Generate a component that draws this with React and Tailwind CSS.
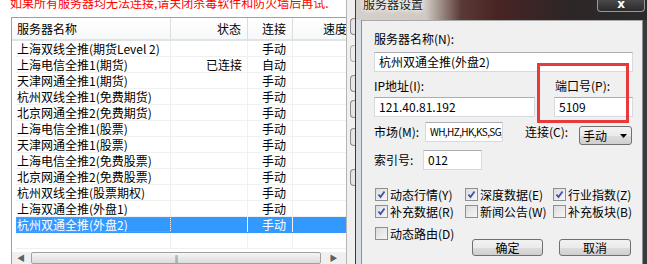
import React from 'react';

const rows = [
  ['上海双线全推(期货Level 2)', '', '手动'],
  ['上海电信全推1(期货)', '已连接', '自动'],
  ['天津网通全推1(期货)', '', '手动'],
  ['杭州双线全推1(免费期货)', '', '手动'],
  ['北京网通全推2(免费期货)', '', '手动'],
  ['上海电信全推1(股票)', '', '手动'],
  ['天津网通全推1(股票)', '', '手动'],
  ['上海电信全推2(免费股票)', '', '手动'],
  ['北京网通全推2(免费股票)', '', '手动'],
  ['杭州双线全推(股票期权)', '', '手动'],
  ['上海双通全推(外盘1)', '', '手动'],
  ['杭州双通全推(外盘2)', '', '手动'],
];

const checks = [
  [
    ['动态行情(Y)', true],
    ['深度数据(E)', true],
    ['行业指数(Z)', true],
  ],
  [
    ['补充数据(R)', true],
    ['新闻公告(W)', false],
    ['补充板块(B)', false],
  ],
];

function CheckBox({ checked }) {
  return (
    <div className="w-[13px] h-[13px] border border-[#8e8f8f] bg-[linear-gradient(135deg,#dcdcdc,#f6f6f6)] p-[1px] shrink-0">
      {checked && (
        <svg viewBox="0 0 11 11" className="w-[11px] h-[11px] -mt-[1px] -ml-[1px]">
          <path d="M2.5 5.5 L4.5 8 L8.5 2.5" fill="none" stroke="#3d4fb0" strokeWidth="1.8" />
        </svg>
      )}
    </div>
  );
}

function Check({ label, checked, w }) {
  return (
    <div className={`flex items-center gap-[2px] h-[13px] ${w}`}>
      <CheckBox checked={checked} />
      <span className="leading-[13px] whitespace-nowrap">{label}</span>
    </div>
  );
}

function Input({ className, children }) {
  return (
    <div
      className={`h-[20px] bg-white border border-[#d6d9dd] border-t-[#abadb3] pl-[4px] leading-[18px] overflow-hidden whitespace-nowrap ${className}`}
    >
      {children}
    </div>
  );
}

function Btn({ children, className }) {
  return (
    <div
      className={`h-[17px] rounded-[3px] border border-[#707070] bg-[linear-gradient(#f2f2f2,#ebebeb_50%,#dddddd_51%,#cfcfcf)] text-center leading-[15px] ${className}`}
    >
      {children}
    </div>
  );
}

export default function App() {
  return (
    <div className="w-[647px] h-[264px] overflow-hidden relative flex bg-white text-[12px] text-black font-['Noto_Sans_CJK_SC','Noto_Sans',sans-serif]">
      {/* list window behind */}
      <div className="w-[346px] shrink-0 flex flex-col bg-white">
        <div className="h-[18px] overflow-hidden pl-[10px]">
          <div className="-mt-[4px] leading-[14px] text-[#ff0000] whitespace-nowrap">
            如果所有服务器均无法连接,请关闭杀毒软件和防火墙后再试.
          </div>
        </div>
        <div className="ml-[11px] flex-1 border-l border-t border-[#9a9ea6] flex flex-col">
          <div className="h-[23px] flex border-b-2 border-[#e2e3e5] bg-[linear-gradient(#ffffff,#f7f8f9)] leading-[22px]">
            <div className="w-[159px] border-r border-[#dcdcdc] pl-[5px]">服务器名称</div>
            <div className="w-[77px] border-r border-[#dcdcdc] text-right pr-[6px]">状态</div>
            <div className="w-[45px] border-r border-[#dcdcdc] pl-[14px]">连接</div>
            <div className="flex-1 pl-[30px] whitespace-nowrap overflow-hidden">速度</div>
          </div>
          {rows.map((r, i) => {
            const sel = i === rows.length - 1;
            return (
              <div key={i} className="h-[16px] flex pl-[4px] leading-[15px]">
                <div className={`flex flex-1 border-b ${sel ? 'bg-[#3399ff] text-white border-[#3399ff]' : 'border-[#f0f0f0]'}`}>
                  <div className={`w-[155px] pl-[1px] border-r whitespace-nowrap overflow-hidden ${sel ? 'border-[#f0f0f0] outline outline-1 outline-dotted outline-[#e08a2c] -outline-offset-1' : 'border-[#f0f0f0]'}`}>
                    {r[0]}
                  </div>
                  <div className="w-[77px] border-r border-[#f0f0f0] text-right pr-[5px]">{r[1]}</div>
                  <div className="w-[45px] border-r border-[#f0f0f0] pl-[14px]">{r[2]}</div>
                  <div className="flex-1" />
                </div>
              </div>
            );
          })}
          <div className="h-[16px] flex pl-[4px]">
            <div className="flex flex-1 border-b border-[#f0f0f0]">
              <div className="w-[155px] border-r border-[#f0f0f0]" />
              <div className="w-[77px] border-r border-[#f0f0f0]" />
              <div className="w-[45px] border-r border-[#f0f0f0]" />
            </div>
          </div>
          {/* horizontal scrollbar */}
          <div className="mt-[3px] h-[12px] flex items-start bg-[#f0f0f0]">
            <div className="w-[18px] text-[8px] leading-[12px] text-center text-[#606060]">◀</div>
            <div className="ml-[1px] w-[290px] h-[12px] rounded-[2px] border border-[#a0a0a0] bg-[linear-gradient(#f5f5f5,#dcdcdc)] flex justify-center">
              <span className="text-[7px] leading-[10px] text-[#777] tracking-[-1px]">|||</span>
            </div>
            <div className="flex-1 text-[8px] leading-[12px] text-center text-[#606060]">▶</div>
          </div>
        </div>
      </div>

      {/* strip with hidden buttons */}
      <div className="w-[9px] shrink-0 border-l border-[#b5b5b5] bg-[#f0f0f0] flex flex-col pl-[3px]">
        <div className="mt-[18px] h-[17px] rounded-l-[4px] border border-r-0 border-[#8a8a8a] bg-[#e6e6e6]" />
        <div className="mt-[10px] h-[17px] rounded-l-[4px] border border-r-0 border-[#b0b0b0] bg-[#ececec]" />
        <div className="mt-[13px] h-[17px] rounded-l-[4px] border border-r-0 border-[#8a8a8a] bg-[#e6e6e6]" />
        <div className="mt-[8px] h-[18px] rounded-l-[4px] border border-r-0 border-[#8a8a8a] bg-[#e6e6e6]" />
        <div className="mt-[10px] h-[18px] rounded-l-[4px] border border-r-0 border-[#8a8a8a] bg-[#e6e6e6]" />
        <div className="mt-[23px] h-[17px] rounded-l-[4px] border border-r-0 border-[#8a8a8a] bg-[#e6e6e6]" />
      </div>

      {/* dialog */}
      <div className="flex-1 flex flex-col border-l border-[#3a3a3a]">
        <div className="h-[20px] flex shrink-0 bg-[linear-gradient(90deg,#d4d0ca_0px,#cfc9c2_70px,#5a3a36_105px,#4a2424_140px,#2e2626_210px,#2a2a2c_100%)]">
          <div className="pl-[7px] -mt-[3px] leading-[14px] text-[#1a1a1a] [text-shadow:0_0_6px_#ffffff,0_0_4px_#ffffff]">服务器设置</div>
          <div className="flex-1" />
          <div className="mr-[2px] w-[48px] h-[12px] rounded-b-[4px] border border-t-0 border-[#9a9a9a] bg-[linear-gradient(#4a4a4a,#2a2a2a)] text-white text-[12px] font-bold leading-[9px] text-center font-['DejaVu_Sans',sans-serif]">
            x
          </div>
        </div>
        <div className="flex-1 flex">
          <div className="w-[6px] bg-[#d9dee4] border-r border-[#8c8f94]" />
          <div className="w-[280px] bg-[#f0f0f0] border-t border-[#a8a8a8] pl-[12px] flex flex-col">
            <div className="mt-[11px] leading-[14px]">服务器名称(N):</div>
            <Input className="mt-[6px] w-[259px]">杭州双通全推(外盘2)</Input>
            <div className="flex">
              <div className="w-[161px]">
                <div className="mt-[7px] leading-[14px]">IP地址(I):</div>
                <Input className="mt-[4px] w-[161px]">121.40.81.192</Input>
              </div>
              <div className="ml-[19px] w-[79px]">
                <div className="mt-[7px] pl-[1px] leading-[14px]">端口号(P):</div>
                <Input className="mt-[4px] w-[79px]">5109</Input>
              </div>
            </div>
            <div className="flex items-start mt-[5px]">
              <div className="w-[51px] mt-[3px] leading-[14px] whitespace-nowrap">市场(M):</div>
              <Input className="w-[78px] text-[10px] pl-[2px] tracking-[-0.6px]">WH,HZ,HK,KS,SG,</Input>
              <div className="ml-[22px] w-[54px] mt-[3px] leading-[14px] whitespace-nowrap">连接(C):</div>
              <div className="mt-[4px] w-[53px] h-[19px] rounded-[3px] border border-[#707070] bg-[linear-gradient(#f2f2f2,#ebebeb_50%,#dddddd_51%,#cfcfcf)] flex items-center pl-[3px] pr-[4px]">
                <span className="leading-[17px]">手动</span>
                <span className="flex-1" />
                <svg viewBox="0 0 7 4" className="w-[7px] h-[4px]">
                  <path d="M0 0 H7 L3.5 4 Z" fill="#000" />
                </svg>
              </div>
            </div>
            <div className="flex items-center mt-[5px]">
              <div className="w-[49px] leading-[14px]">索引号:</div>
              <Input className="w-[59px]">012</Input>
            </div>
            <div className="mt-[18px] flex flex-col gap-[4px] ml-[1px]">
              {checks.map((row, i) => (
                <div key={i} className="flex">
                  <Check label={row[0][0]} checked={row[0][1]} w="w-[90px]" />
                  <Check label={row[1][0]} checked={row[1][1]} w="w-[88px]" />
                  <Check label={row[2][0]} checked={row[2][1]} w="" />
                </div>
              ))}
              <div className="mt-[5px]">
                <Check label="动态路由(D)" checked={false} w="" />
              </div>
            </div>
            <div className="flex -mt-[1px] ml-[98px]">
              <Btn className="w-[71px]">确定</Btn>
              <Btn className="ml-[16px] w-[72px]">取消</Btn>
            </div>
          </div>
          <div className="flex-1 border-l border-[#8c8f94] bg-[#3a3a3c]" />
        </div>
      </div>

      {/* annotation */}
      <div className="absolute left-[537px] top-[63px] w-[92px] h-[60px] border-[3px] border-[#e8393b]" />
    </div>
  );
}
